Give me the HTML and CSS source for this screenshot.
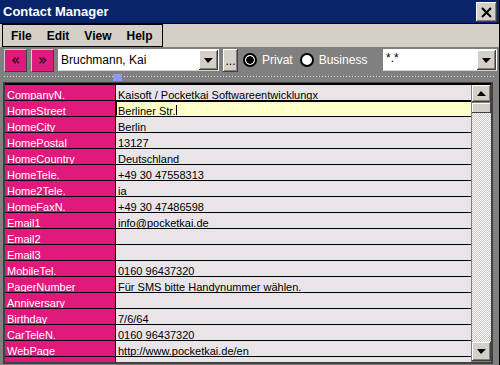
FILE: index.html
```html
<!DOCTYPE html>
<html>
<head>
<meta charset="utf-8">
<link rel="stylesheet" href="styles.css">
</head>
<body>
<div class="window">
  <div class="titlebar">
    <span class="title">Contact Manager</span>
    <span class="close"><svg width="11" height="11" viewBox="0 0 11 11"><path d="M1 1L10 10M10 1L1 10" stroke="#000" stroke-width="2" fill="none"/></svg></span>
  </div>
  <div class="menubar">
    <div class="menu"><span>File</span><span>Edit</span><span>View</span><span>Help</span></div>
  </div>
  <div class="toolbar">
    <div class="tools">
      <span class="nav">«</span>
      <span class="nav">»</span>
      <span class="combo name"><span class="combo-text">Bruchmann, Kai</span><span class="drop"><span class="tri-down"></span></span></span>
      <span class="dots">...</span>
      <span class="radio on"></span><span class="rlabel">Privat</span>
      <span class="radio"></span><span class="rlabel">Business</span>
      <span class="combo filter"><span class="combo-text">*.*</span><span class="drop"><span class="tri-down"></span></span></span>
    </div>
    <div class="divider"><span class="handle"></span></div>
  </div>
  <div class="frame">
    <div class="inner">
      <div class="grid">
        <div class="row"><div class="label">CompanyN.</div><div class="value">Kaisoft / Pocketkai Softwareentwicklungx</div></div>
        <div class="row"><div class="label">HomeStreet</div><div class="value edit">Berliner Str.<span class="caret"></span></div></div>
        <div class="row"><div class="label">HomeCity</div><div class="value">Berlin</div></div>
        <div class="row"><div class="label">HomePostal</div><div class="value">13127</div></div>
        <div class="row"><div class="label">HomeCountry</div><div class="value">Deutschland</div></div>
        <div class="row"><div class="label">HomeTele.</div><div class="value">+49 30 47558313</div></div>
        <div class="row"><div class="label">Home2Tele.</div><div class="value">ia</div></div>
        <div class="row"><div class="label">HomeFaxN.</div><div class="value">+49 30 47486598</div></div>
        <div class="row"><div class="label">Email1</div><div class="value">info@pocketkai.de</div></div>
        <div class="row"><div class="label">Email2</div><div class="value"></div></div>
        <div class="row"><div class="label">Email3</div><div class="value"></div></div>
        <div class="row"><div class="label">MobileTel.</div><div class="value">0160 96437320</div></div>
        <div class="row"><div class="label">PagerNumber</div><div class="value">Für SMS bitte Handynummer wählen.</div></div>
        <div class="row"><div class="label">Anniversary</div><div class="value"></div></div>
        <div class="row"><div class="label">Birthday</div><div class="value">7/6/64</div></div>
        <div class="row"><div class="label">CarTeleN.</div><div class="value">0160 96437320</div></div>
        <div class="row"><div class="label">WebPage</div><div class="value">http://www.pocketkai.de/en</div></div>
      </div>
      <div class="scrollbar">
        <span class="sbtn"><span class="tri-up"></span></span>
        <span class="thumb"></span>
        <span class="track"></span>
        <span class="sbtn"><span class="tri-down"></span></span>
      </div>
    </div>
  </div>
</div>
</body>
</html>
```
FILE: styles.css
```css
* { box-sizing: border-box; margin: 0; padding: 0; }
html, body { width: 500px; height: 365px; overflow: hidden; }
body {
  font-family: "Liberation Sans", Arial, sans-serif;
  font-size: 11px;
  background: #808080;
}
.window {
  display: flex;
  flex-direction: column;
  height: 365px;
  width: 500px;
  border-right: 1px solid #000;
}
.titlebar {
  height: 24px;
  flex: none;
  background: #0a246a;
  border-bottom: 1px solid #000;
  display: flex;
  justify-content: space-between;
  align-items: flex-start;
  padding: 2px 2px 0 3px;
}
.title {
  color: #fff;
  font-weight: bold;
  font-size: 13px;
  line-height: 19px;
}
.close {
  width: 21px;
  height: 20px;
  background: #d4d0c8;
  box-shadow: inset -1px -1px #404040, inset 1px 1px #fff, inset -2px -2px #808080;
  display: flex;
  align-items: center;
  justify-content: center;
}
.menubar {
  height: 23px;
  flex: none;
  background: #d4d0c8;
  padding-left: 2px;
}
.menu {
  width: 161px;
  height: 23px;
  border: 1px solid #000;
  display: flex;
  align-items: center;
  gap: 15px;
  padding-left: 8px;
  font-weight: bold;
  font-size: 12px;
  color: #000;
}
.toolbar {
  flex: none;
  padding: 2px 2px 0 4px;
}
.tools {
  display: flex;
  align-items: flex-start;
  height: 23px;
}
.nav {
  width: 23px;
  height: 23px;
  margin-right: 4px;
  background: #e0197d;
  border: 1px solid;
  border-color: #d4d0c8 #404040 #404040 #d4d0c8;
  display: flex;
  align-items: center;
  justify-content: center;
  font-family: "DejaVu Sans", sans-serif;
  font-size: 15px;
  line-height: 15px;
  color: #000;
  padding-bottom: 1px;
}
.combo {
  height: 22px;
  background: #fff;
  border: 1px solid #fff;
  border-bottom-color: #d4d0c8;
  display: flex;
  align-items: center;
  justify-content: space-between;
}
.combo.name { width: 161px; }
.combo.filter { width: 114px; margin-left: auto; }
.combo-text {
  padding-left: 2px;
  font-size: 12px;
  color: #000;
}
.filter .combo-text { align-self: flex-start; padding-top: 1px; }
.drop {
  width: 19px;
  height: 20px;
  background: #d4d0c8;
  box-shadow: inset -1px -1px #404040, inset 1px 1px #fff, inset -2px -2px #808080;
  display: flex;
  align-items: center;
  justify-content: center;
}
.tri-down {
  width: 0; height: 0;
  border-left: 4px solid transparent;
  border-right: 5px solid transparent;
  border-top: 5px solid #000;
}
.tri-up {
  width: 0; height: 0;
  border-left: 4px solid transparent;
  border-right: 5px solid transparent;
  border-bottom: 5px solid #000;
}
.dots {
  width: 15px;
  height: 23px;
  margin-left: 4px;
  background: #d4d0c8;
  box-shadow: inset -1px -1px #404040, inset 1px 1px #fff, inset -2px -2px #808080;
  display: flex;
  align-items: flex-end;
  justify-content: center;
  font-size: 12px;
  line-height: 15px;
  padding-bottom: 3px;
  color: #000;
}
.radio {
  width: 14px;
  height: 14px;
  margin-top: 4px;
  border-radius: 50%;
  border: 2px solid #000;
  background: #fff;
  flex: none;
}
.radio.on { margin-left: 5px; background: radial-gradient(circle, #000 0 3.5px, #fff 4px); }
.rlabel {
  color: #fff;
  font-size: 12px;
  line-height: 23px;
  margin-left: 5px;
  margin-right: 7px;
}
.divider {
  height: 10px;
  position: relative;
  background: repeating-linear-gradient(to right, #d8d8d8 0 1px, transparent 1px 3px) 0 4px / 100% 1px no-repeat;
  margin-right: 2px;
}
.handle {
  position: absolute;
  left: 109px;
  top: 2px;
  width: 9px;
  height: 7px;
  background: #9494ff;
}
.frame {
  flex: 1;
  min-height: 0;
  width: 490px;
  margin-left: 3px;
  margin-bottom: 1px;
  border-top: 1px solid #404040;
  border-left: 2px solid #404040;
  border-right: 2px solid #404040;
  border-bottom: 2px solid #404040;
  display: flex;
  flex-direction: column;
}
.inner {
  flex: 1;
  min-height: 0;
  display: flex;
  border-top: 2px solid #000;
}
.grid {
  flex: 1;
  overflow: hidden;
  background: linear-gradient(to right, #e0197d 0 110px, #000 110px 111px, #e8e4e8 111px);
}
.row {
  display: flex;
  height: 16px;
  border-bottom: 1px solid #000;
}
.label {
  width: 111px;
  flex: none;
  height: 15px;
  border-right: 1px solid #000;
  background: #e0197d;
  color: #fff;
  padding: 3px 0 0 2px;
  line-height: 15px;
  overflow: hidden;
  white-space: nowrap;
}
.value {
  flex: 1;
  height: 15px;
  background: #e8e4e8;
  color: #000;
  padding: 3px 0 0 2px;
  line-height: 15px;
  overflow: hidden;
  white-space: nowrap;
}
.value.edit {
  background: #ffffc8;
  border-left: 1px solid #000;
  border-top: 1px solid #000;
  border-bottom: 1px solid #fff;
  padding: 2px 0 0 1px;
  line-height: 14px;
}
.caret {
  display: inline-block;
  width: 1px;
  height: 12px;
  margin-left: 1px;
  background: #000;
  vertical-align: -2px;
}
.scrollbar {
  width: 20px;
  flex: none;
  display: flex;
  flex-direction: column;
  padding-bottom: 1px;
}
.sbtn {
  height: 17px;
  flex: none;
  margin-left: 1px;
  background: #d4d0c8;
  box-shadow: inset -1px -1px #404040, inset 1px 1px #fff, inset -2px -2px #808080, inset 0 0 0 1px #808080;
  display: flex;
  align-items: center;
  justify-content: center;
}
.sbtn:last-child { height: 19px; }
.thumb {
  height: 10px;
  flex: none;
  margin: 1px 0 0 1px;
  background: #d4d0c8;
  box-shadow: inset -1px -1px #404040, inset 1px 1px #fff, inset 0 0 0 1px #808080;
}
.track {
  flex: 1;
  margin-left: 1px;
  background-image: conic-gradient(#fff 25%, #c8c4c0 0 50%, #fff 0 75%, #c8c4c0 0);
  background-size: 2px 2px;
}
```
